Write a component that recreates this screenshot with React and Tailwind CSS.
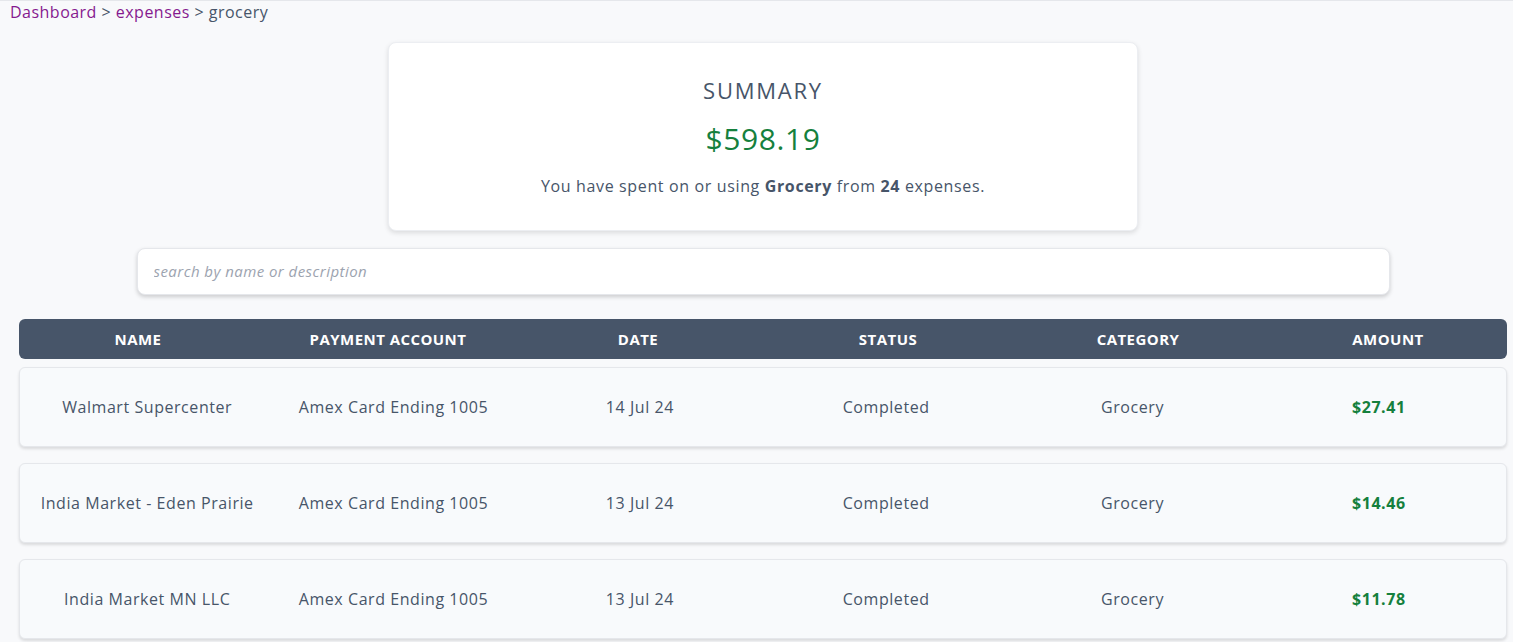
import React from "react";

const rows = [
  ["Walmart Supercenter", "Amex Card Ending 1005", "14 Jul 24", "Completed", "Grocery", "$27.41"],
  ["India Market - Eden Prairie", "Amex Card Ending 1005", "13 Jul 24", "Completed", "Grocery", "$14.46"],
  ["India Market MN LLC", "Amex Card Ending 1005", "13 Jul 24", "Completed", "Grocery", "$11.78"],
];

export default function App() {
  return (
    <div
      className="min-h-[642px] bg-[#f8f9fb] border-t border-[#e5e7eb] text-[#475569]"
      style={{ fontFamily: '"Open Sans", "Noto Sans", sans-serif' }}
    >
      <div className="pl-[10px] pt-[1px] text-[16px] leading-[20px] tracking-[0.03em]">
        <span className="text-[#86198f]">Dashboard</span>
        <span className="text-[#475569]"> &gt; </span>
        <span className="text-[#86198f]">expenses</span>
        <span className="text-[#475569]"> &gt; grocery</span>
      </div>

      <div className="pl-[19px] pr-[6px]">
        <div className="mx-auto mt-[20px] w-[750px] h-[189px] bg-white rounded-lg border border-[#eceef2] shadow-[0_2px_5px_rgba(0,0,0,0.12)] flex flex-col items-center">
          <div className="mt-[33px] text-[22px] leading-[28px] tracking-[0.08em] text-[#475569]">SUMMARY</div>
          <div className="mt-[18px] text-[30px] leading-[34px] tracking-[0.02em] text-[#15803d]">$598.19</div>
          <div className="mt-[20px] text-[16px] leading-[20px] tracking-[0.04em] text-[#475569]">
            You have spent on or using <b>Grocery</b> from <b>24</b> expenses.
          </div>
        </div>

        <div className="mx-auto mt-[17px] w-[1253px] h-[47px] bg-white rounded-lg border border-[#e5e7eb] shadow-[0_2px_4px_rgba(0,0,0,0.18)] flex items-center px-[16px]">
          <input
            className="w-full outline-none text-[15px] italic tracking-[0.03em] placeholder:text-[#9ca3af] bg-transparent"
            placeholder="search by name or description"
          />
        </div>

        <div className="mt-[24px] h-[40px] bg-[#475569] rounded-md flex items-center">
          <div className="-mx-[6px] w-[1500px] grid grid-cols-6 text-white font-bold text-[15px] tracking-[0.03em] text-center">
            <div>NAME</div>
            <div>PAYMENT ACCOUNT</div>
            <div>DATE</div>
            <div>STATUS</div>
            <div>CATEGORY</div>
            <div>AMOUNT</div>
          </div>
        </div>

        <div className="mt-[8px] flex flex-col gap-[16px]">
          {rows.map((r, i) => (
            <div
              key={i}
              className="h-[80px] bg-[#f8fafc] rounded-md border border-[#e5e7eb] shadow-[0_2px_3px_rgba(0,0,0,0.12)] px-[4px] grid grid-cols-6 items-center text-center text-[16px] tracking-[0.035em] text-[#475569]"
            >
              <div>{r[0]}</div>
              <div>{r[1]}</div>
              <div>{r[2]}</div>
              <div>{r[3]}</div>
              <div>{r[4]}</div>
              <div className="font-bold text-[#15803d]">{r[5]}</div>
            </div>
          ))}
        </div>
      </div>
    </div>
  );
}
